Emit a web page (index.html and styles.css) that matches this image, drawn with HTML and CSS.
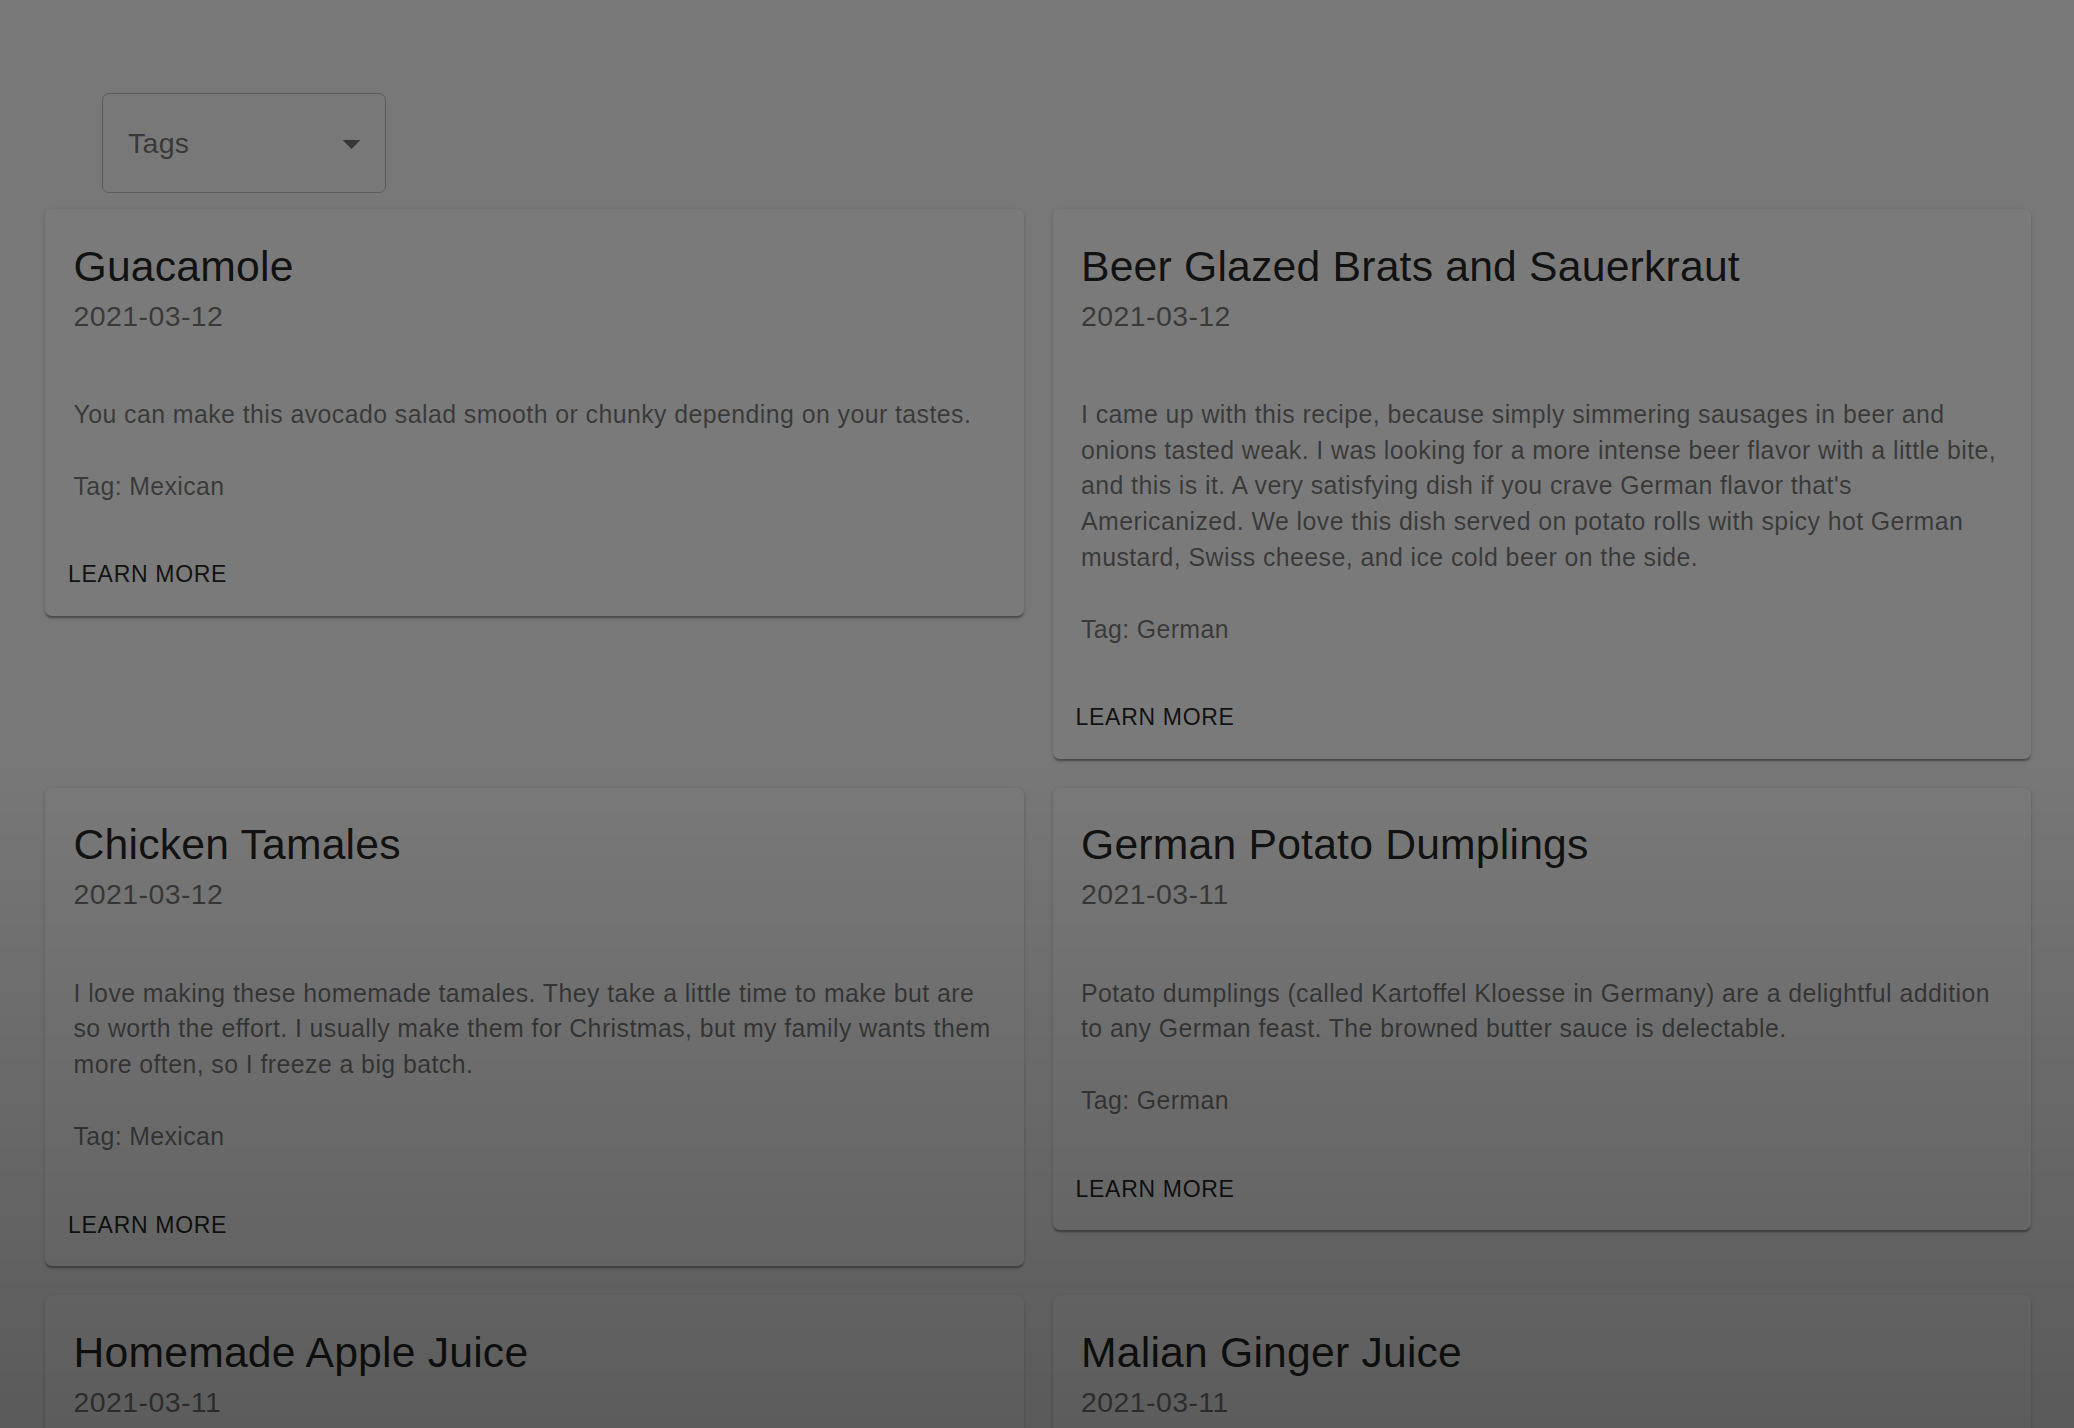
FILE: index.html
```html
<!DOCTYPE html>
<html lang="en">
<head>
<meta charset="utf-8">
<title>Recipes</title>
<link rel="stylesheet" href="styles.css">
</head>
<body>
<div class="page">
  <div class="toolbar">
    <div class="select">
      <span class="select-label">Tags</span>
      <svg class="select-icon" viewBox="0 0 24 24" width="43" height="43"><path d="M7 10l5 5 5-5z" fill="rgba(0,0,0,0.54)"/></svg>
    </div>
  </div>
  <div class="grid">
    <div class="card">
      <div class="card-content">
        <h2 class="title">Guacamole</h2>
        <div class="date">2021-03-12</div>
        <p class="desc">You can make this avocado salad smooth or chunky depending on your tastes.</p>
        <p class="tag">Tag: Mexican</p>
      </div>
      <div class="card-actions"><button class="btn">Learn More</button></div>
    </div>
    <div class="card">
      <div class="card-content">
        <h2 class="title">Beer Glazed Brats and Sauerkraut</h2>
        <div class="date">2021-03-12</div>
        <p class="desc">I came up with this recipe, because simply simmering sausages in beer and onions tasted weak. I was looking for a more intense beer flavor with a little bite, and this is it. A very satisfying dish if you crave German flavor that's Americanized. We love this dish served on potato rolls with spicy hot German mustard, Swiss cheese, and ice cold beer on the side.</p>
        <p class="tag">Tag: German</p>
      </div>
      <div class="card-actions"><button class="btn">Learn More</button></div>
    </div>
    <div class="card">
      <div class="card-content">
        <h2 class="title">Chicken Tamales</h2>
        <div class="date">2021-03-12</div>
        <p class="desc">I love making these homemade tamales. They take a little time to make but are so worth the effort. I usually make them for Christmas, but my family wants them more often, so I freeze a big batch.</p>
        <p class="tag">Tag: Mexican</p>
      </div>
      <div class="card-actions"><button class="btn">Learn More</button></div>
    </div>
    <div class="card">
      <div class="card-content">
        <h2 class="title">German Potato Dumplings</h2>
        <div class="date">2021-03-11</div>
        <p class="desc">Potato dumplings (called Kartoffel Kloesse in Germany) are a delightful addition to any German feast. The browned butter sauce is delectable.</p>
        <p class="tag">Tag: German</p>
      </div>
      <div class="card-actions"><button class="btn">Learn More</button></div>
    </div>
    <div class="card">
      <div class="card-content">
        <h2 class="title">Homemade Apple Juice</h2>
        <div class="date">2021-03-11</div>
        <p class="desc">Fresh apple juice made at home from ripe apples.</p>
        <p class="tag">Tag: Drinks</p>
      </div>
      <div class="card-actions"><button class="btn">Learn More</button></div>
    </div>
    <div class="card">
      <div class="card-content">
        <h2 class="title">Malian Ginger Juice</h2>
        <div class="date">2021-03-11</div>
        <p class="desc">A spicy and refreshing ginger drink from Mali.</p>
        <p class="tag">Tag: Drinks</p>
      </div>
      <div class="card-actions"><button class="btn">Learn More</button></div>
    </div>
  </div>
</div>
<div class="backdrop"></div>
</body>
</html>
```
FILE: styles.css
```css
html, body {
  margin: 0;
  padding: 0;
  overflow: hidden;
  height: 100%;
}
body {
  background: #fafafa;
  font-family: "Liberation Sans", Arial, Helvetica, sans-serif;
  color: rgba(0, 0, 0, 0.87);
}
.page {
  padding-bottom: 60px;
}
.toolbar {
  padding: 93px 0 16px 102px;
}
.select {
  box-sizing: border-box;
  width: 284px;
  height: 100px;
  border: 1.8px solid rgba(0, 0, 0, 0.23);
  border-radius: 7px;
  display: flex;
  align-items: center;
  justify-content: space-between;
  padding: 0 12px 0 25px;
  background: transparent;
}
.select-label {
  font-size: 28.5px;
  letter-spacing: 0.3px;
  color: rgba(0, 0, 0, 0.54);
  line-height: 1;
}
.select-icon {
  display: block;
}
.grid {
  display: grid;
  grid-template-columns: 1fr 1fr;
  column-gap: 29px;
  row-gap: 29px;
  align-items: start;
  margin: 0 43px 0 45px;
}
.card {
  background: #fff;
  border-radius: 7px;
  box-shadow: 0 3.5px 1.8px -1.8px rgba(0, 0, 0, 0.2), 0 1.8px 1.8px 0 rgba(0, 0, 0, 0.14), 0 1.8px 5.3px 0 rgba(0, 0, 0, 0.12);
  overflow: hidden;
}
.card-content {
  padding: 28.5px;
}
.title {
  margin: 0;
  font-size: 42.7px;
  line-height: 57px;
  font-weight: 400;
  letter-spacing: 0.2px;
  color: rgba(0, 0, 0, 0.87);
}
.date {
  font-size: 28.5px;
  line-height: 42.7px;
  letter-spacing: 0.4px;
  color: rgba(0, 0, 0, 0.54);
}
.desc {
  margin: 59.5px 0 0;
  font-size: 24.9px;
  line-height: 35.8px;
  letter-spacing: 0.42px;
  color: rgba(0, 0, 0, 0.54);
}
.tag {
  margin: 36px 0 0;
  font-size: 24.9px;
  line-height: 35.8px;
  letter-spacing: 0.36px;
  color: rgba(0, 0, 0, 0.54);
}
.card-actions {
  padding: 14.2px;
  display: flex;
}
.btn {
  font-family: inherit;
  background: none;
  border: 0;
  padding: 7.1px 8.9px;
  font-size: 23px;
  line-height: 40.3px;
  letter-spacing: 0.7px;
  text-transform: uppercase;
  color: rgba(0, 0, 0, 0.87);
  border-radius: 7px;
}
.backdrop {
  position: fixed;
  inset: 0;
  background: linear-gradient(to bottom, rgba(0, 0, 0, 0.52) 0%, rgba(0, 0, 0, 0.52) 53%, rgba(0, 0, 0, 0.64) 100%);
}
```
